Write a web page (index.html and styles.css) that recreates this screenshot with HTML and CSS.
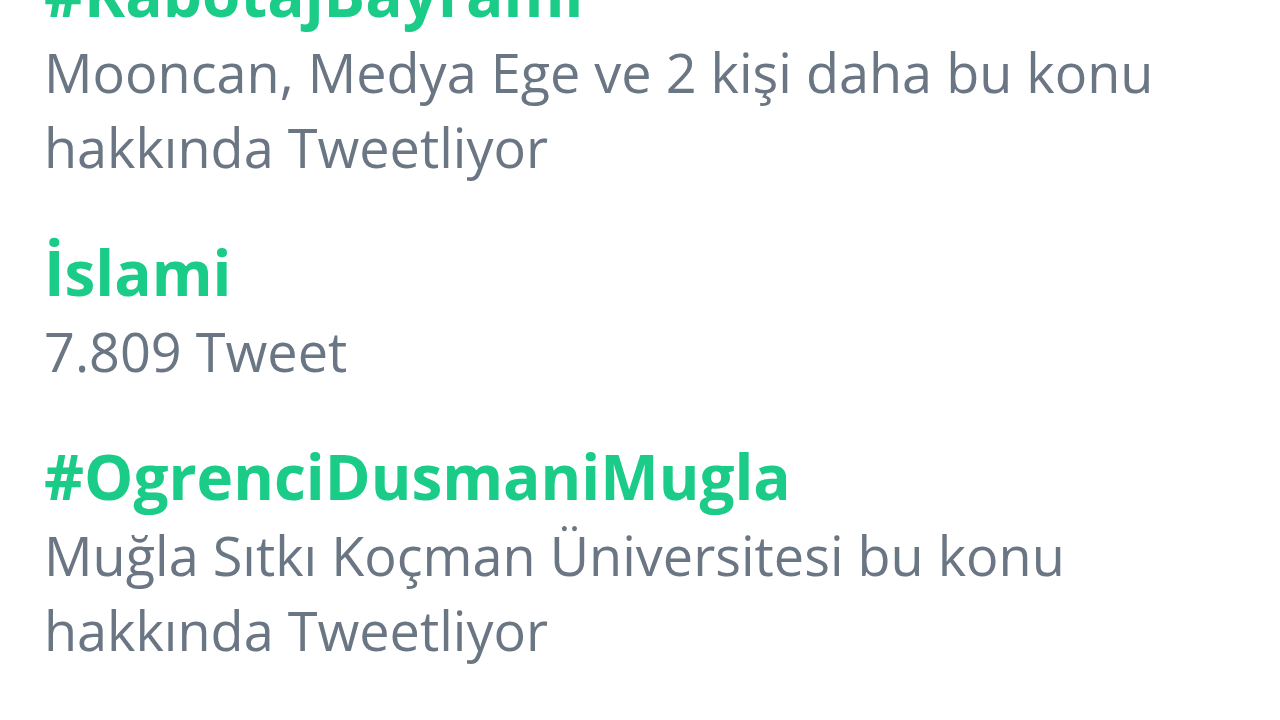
FILE: index.html
```html
<!DOCTYPE html>
<html lang="tr">
<head>
<meta charset="utf-8">
<title>Trendler</title>
<link rel="stylesheet" href="styles.css">
</head>
<body>
<ul class="trends">
  <li class="trend">
    <a class="trend-name">#KabotajBayramı</a>
    <p class="trend-meta">Mooncan, Medya Ege ve 2 kişi daha bu konu hakkında Tweetliyor</p>
  </li>
  <li class="trend">
    <a class="trend-name">İslami</a>
    <p class="trend-meta">7.809 Tweet</p>
  </li>
  <li class="trend">
    <a class="trend-name">#OgrenciDusmaniMugla</a>
    <p class="trend-meta">Muğla Sıtkı Koçman Üniversitesi bu konu hakkında Tweetliyor</p>
  </li>
</ul>
</body>
</html>
```
FILE: styles.css
```css
html, body {
  margin: 0;
  padding: 0;
  background: #ffffff;
  overflow: hidden;
}

body {
  font-family: "Open Sans", "Noto Sans", "DejaVu Sans", sans-serif;
  height: 720px;
}

.trends {
  list-style: none;
  margin: -49px 0 0 0;
  padding: 0 0 0 44px;
  width: 1180px;
  display: flex;
  flex-direction: column;
  gap: 45px;
}

.trend {
  display: flex;
  flex-direction: column;
}

.trend-name {
  display: block;
  color: #1bcb88;
  font-weight: 700;
  font-size: 62px;
  line-height: 84px;
  text-decoration: none;
}

.trend-meta {
  margin: 0;
  color: #6a7683;
  font-size: 54px;
  line-height: 75px;
}
```
